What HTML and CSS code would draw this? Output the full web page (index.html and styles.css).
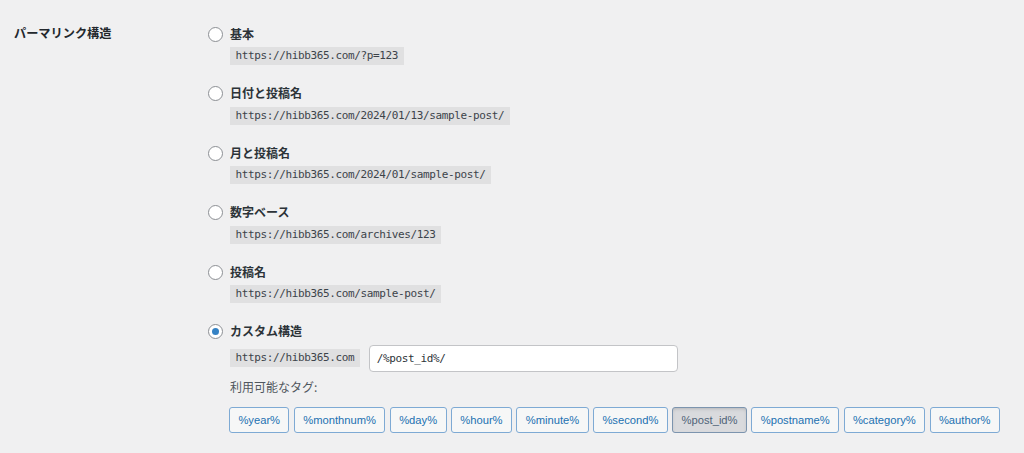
FILE: index.html
```html
<!DOCTYPE html>
<html lang="ja">
<head>
<meta charset="utf-8">
<title>パーマリンク構造</title>
<link rel="stylesheet" href="styles.css">
</head>
<body>
<div class="form-row">
  <div class="row-label">パーマリンク構造</div>
  <div class="row-field">
    <div class="option">
      <label class="opt-line"><span class="radio"></span><span class="opt-text">基本</span></label>
      <code class="sample">https://hibb365.com/?p=123</code>
    </div>
    <div class="option">
      <label class="opt-line"><span class="radio"></span><span class="opt-text">日付と投稿名</span></label>
      <code class="sample">https://hibb365.com/2024/01/13/sample-post/</code>
    </div>
    <div class="option">
      <label class="opt-line"><span class="radio"></span><span class="opt-text">月と投稿名</span></label>
      <code class="sample">https://hibb365.com/2024/01/sample-post/</code>
    </div>
    <div class="option">
      <label class="opt-line"><span class="radio"></span><span class="opt-text">数字ベース</span></label>
      <code class="sample">https://hibb365.com/archives/123</code>
    </div>
    <div class="option">
      <label class="opt-line"><span class="radio"></span><span class="opt-text">投稿名</span></label>
      <code class="sample">https://hibb365.com/sample-post/</code>
    </div>
    <div class="option custom">
      <label class="opt-line"><span class="radio checked"></span><span class="opt-text">カスタム構造</span></label>
      <div class="custom-line">
        <code class="sample">https://hibb365.com</code>
        <div class="text-input">/%post_id%/</div>
      </div>
      <div class="tags-title">利用可能なタグ:</div>
      <div class="tags">
        <span class="tag">%year%</span>
        <span class="tag">%monthnum%</span>
        <span class="tag">%day%</span>
        <span class="tag">%hour%</span>
        <span class="tag">%minute%</span>
        <span class="tag">%second%</span>
        <span class="tag active">%post_id%</span>
        <span class="tag">%postname%</span>
        <span class="tag">%category%</span>
        <span class="tag">%author%</span>
      </div>
    </div>
  </div>
</div>
</body>
</html>
```

FILE: styles.css
```css
html, body {
  margin: 0;
  padding: 0;
  background: #f0f0f1;
}
body {
  font-family: "Noto Sans CJK JP", "Noto Sans", sans-serif;
  color: #1d2327;
  width: 1024px;
  height: 453px;
  overflow: hidden;
}
.form-row {
  display: flex;
  padding-top: 24px;
}
.row-label {
  width: 194px;
  padding-left: 14px;
  font-size: 12.2px;
  font-weight: 700;
  line-height: 18px;
  color: #23282d;
}
.row-field {
  display: flex;
  flex-direction: column;
}
.option {
  display: flex;
  flex-direction: column;
  align-items: flex-start;
  margin-bottom: 18.6px;
}
.opt-line {
  display: flex;
  align-items: center;
  height: 18px;
}
.radio {
  box-sizing: border-box;
  width: 15px;
  height: 15px;
  border: 1px solid #8c8f94;
  border-radius: 50%;
  background: #fff;
  margin-right: 7px;
  display: flex;
  align-items: center;
  justify-content: center;
  margin-top: 2px;
}
.radio.checked::before {
  content: "";
  width: 7px;
  height: 7px;
  border-radius: 50%;
  background: #3582c4;
}
.opt-text {
  font-size: 12px;
  font-weight: 700;
  color: #2c3338;
}
.sample {
  display: block;
  margin-top: 5px;
  margin-left: 22px;
  height: 18px;
  line-height: 18px;
  padding: 0 5.5px;
  background: #e0e0e1;
  font-family: "DejaVu Sans Mono", "Liberation Mono", monospace;
  font-size: 11px;
  letter-spacing: -0.37px;
  color: #3c434a;
}
.custom-line {
  display: flex;
  align-items: center;
  margin-top: 5px;
  margin-left: 22px;
}
.custom-line .sample {
  margin: 0;
}
.text-input {
  box-sizing: border-box;
  margin-left: 9px;
  width: 309px;
  height: 27px;
  line-height: 25px;
  padding: 0 7px;
  background: #fff;
  border: 1px solid #c3c4c7;
  border-radius: 4px;
  font-family: "DejaVu Sans Mono", "Liberation Mono", monospace;
  font-size: 11px;
  letter-spacing: -0.37px;
  color: #2c3338;
}
.tags-title {
  margin-left: 22px;
  margin-top: 6px;
  font-size: 12px;
  line-height: 18px;
  color: #50575e;
}
.tags {
  display: flex;
  gap: 4.4px;
  margin-left: 21px;
  margin-top: 11px;
}
.tag {
  box-sizing: border-box;
  height: 26px;
  line-height: 24px;
  padding: 0 8.4px;
  border: 1px solid #7eaad4;
  border-radius: 3px;
  background: #f6f7f7;
  color: #2271b1;
  font-family: "Liberation Sans", Arial, sans-serif;
  font-size: 11.2px;
}
.tag.active {
  background: #d9dadd;
  border-color: #7c94ae;
  color: #4f6378;
  box-shadow: inset 0 2px 4px -2px rgba(0, 0, 0, 0.25);
}
```
